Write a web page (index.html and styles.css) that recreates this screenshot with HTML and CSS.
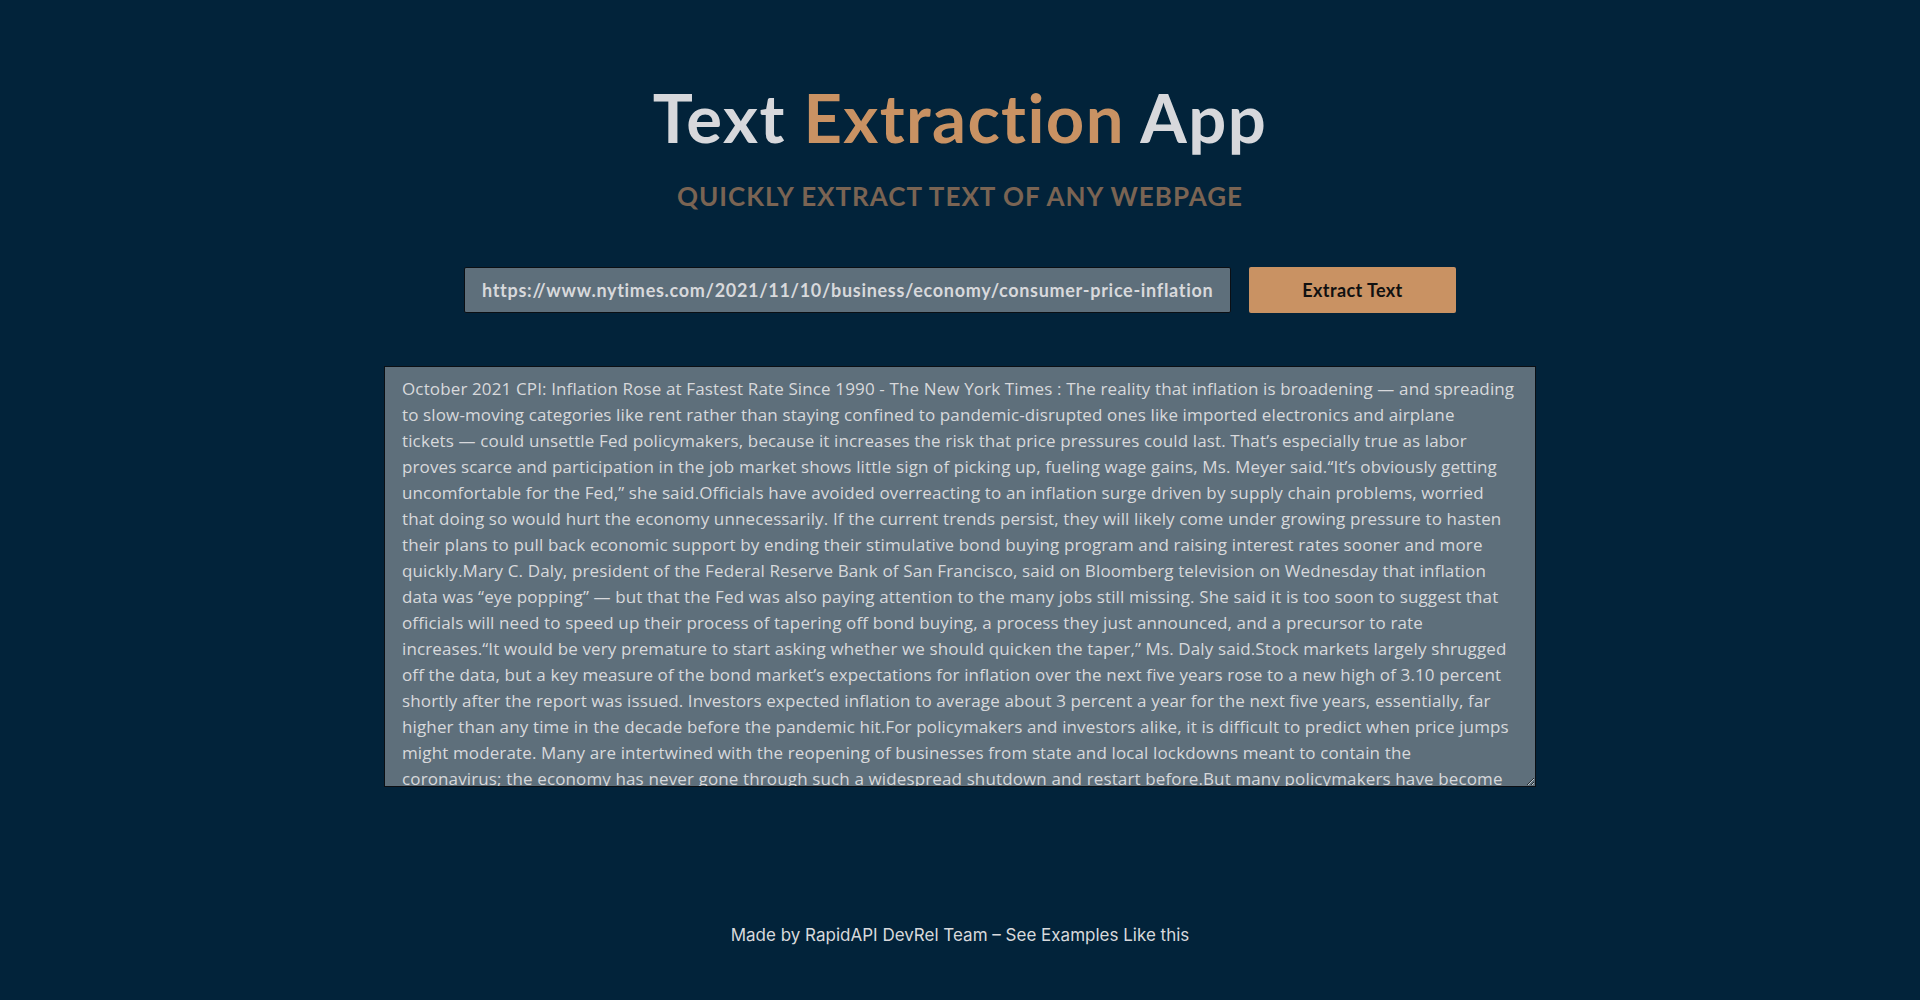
FILE: index.html
```html
<!DOCTYPE html>
<html lang="en">
<head>
<meta charset="utf-8">
<title>Text Extraction App</title>
<link rel="stylesheet" href="styles.css">
</head>
<body>
<main class="page">
  <header class="hero">
    <h1 class="title">Text <span class="accent">Extraction</span> App</h1>
    <p class="subtitle">QUICKLY EXTRACT TEXT OF ANY WEBPAGE</p>
  </header>
  <form class="extract-form">
    <input class="url-input" type="text" value="https://www.nytimes.com/2021/11/10/business/economy/consumer-price-inflation">
    <button class="extract-btn" type="button">Extract Text</button>
  </form>
  <textarea class="result" spellcheck="false">October 2021 CPI: Inflation Rose at Fastest Rate Since 1990 - The New York Times : The reality that inflation is broadening — and spreading
to slow-moving categories like rent rather than staying confined to pandemic-disrupted ones like imported electronics and airplane
tickets — could unsettle Fed policymakers, because it increases the risk that price pressures could last. That’s especially true as labor
proves scarce and participation in the job market shows little sign of picking up, fueling wage gains, Ms. Meyer said.“It’s obviously getting
uncomfortable for the Fed,” she said.Officials have avoided overreacting to an inflation surge driven by supply chain problems, worried
that doing so would hurt the economy unnecessarily. If the current trends persist, they will likely come under growing pressure to hasten
their plans to pull back economic support by ending their stimulative bond buying program and raising interest rates sooner and more
quickly.Mary C. Daly, president of the Federal Reserve Bank of San Francisco, said on Bloomberg television on Wednesday that inflation
data was “eye popping” — but that the Fed was also paying attention to the many jobs still missing. She said it is too soon to suggest that
officials will need to speed up their process of tapering off bond buying, a process they just announced, and a precursor to rate
increases.“It would be very premature to start asking whether we should quicken the taper,” Ms. Daly said.Stock markets largely shrugged
off the data, but a key measure of the bond market’s expectations for inflation over the next five years rose to a new high of 3.10 percent
shortly after the report was issued. Investors expected inflation to average about 3 percent a year for the next five years, essentially, far
higher than any time in the decade before the pandemic hit.For policymakers and investors alike, it is difficult to predict when price jumps
might moderate. Many are intertwined with the reopening of businesses from state and local lockdowns meant to contain the
coronavirus; the economy has never gone through such a widespread shutdown and restart before.But many policymakers have become
wary of waiting too long to respond, given how persistent the price increases have proved.</textarea>
  <footer class="footer">Made by RapidAPI DevRel Team – See Examples Like this</footer>
</main>
</body>
</html>
```

FILE: styles.css
```css
* { box-sizing: border-box; }

html, body {
  margin: 0;
  padding: 0;
  background: #02233a;
  height: 100%;
}

body {
  font-family: Lato, "Open Sans", sans-serif;
  color: #d8d9dc;
}

.page {
  display: flex;
  flex-direction: column;
  align-items: center;
  padding-top: 77px;
}

.hero {
  display: flex;
  flex-direction: column;
  align-items: center;
}

.title {
  margin: 0;
  font-size: 67px;
  line-height: 80px;
  font-weight: 700;
  color: #d7d8dc;
  letter-spacing: 1.4px;
}

.accent { color: #c99263; }

.subtitle {
  margin: 23px 0 0;
  font-size: 26px;
  line-height: 32px;
  font-weight: 700;
  letter-spacing: 1px;
  color: #7a6453;
}

.extract-form {
  display: flex;
  gap: 18px;
  margin-top: 55px;
}

.url-input {
  width: 767px;
  height: 46px;
  padding: 0 17px;
  background: #5e6f7b;
  border: 1px solid #0b0f14;
  border-radius: 2px;
  font-family: Lato, sans-serif;
  font-weight: 700;
  font-size: 18px;
  letter-spacing: 0.7px;
  color: #d8d9dc;
  outline: none;
}

.extract-btn {
  width: 207px;
  height: 46px;
  background: #c99263;
  border: none;
  border-radius: 2px;
  font-family: Lato, sans-serif;
  font-weight: 700;
  font-size: 18px;
  letter-spacing: 0.4px;
  color: #111;
  cursor: pointer;
}

.result {
  margin-top: 53px;
  width: 1152px;
  height: 421px;
  padding: 9px 17px 8px;
  background: #5e6f7b;
  border: 1px solid #0b0f14;
  border-radius: 0;
  font-family: "Open Sans", Lato, sans-serif;
  font-size: 17px;
  line-height: 26px;
  letter-spacing: 0.13px;
  color: #d8d9dc;
  white-space: pre;
  overflow: hidden;
  resize: both;
  outline: none;
}

.footer {
  margin-top: 138px;
  font-family: Inter, "Noto Sans", sans-serif;
  font-size: 17px;
  line-height: 20px;
  color: #d8d9dc;
}
```
